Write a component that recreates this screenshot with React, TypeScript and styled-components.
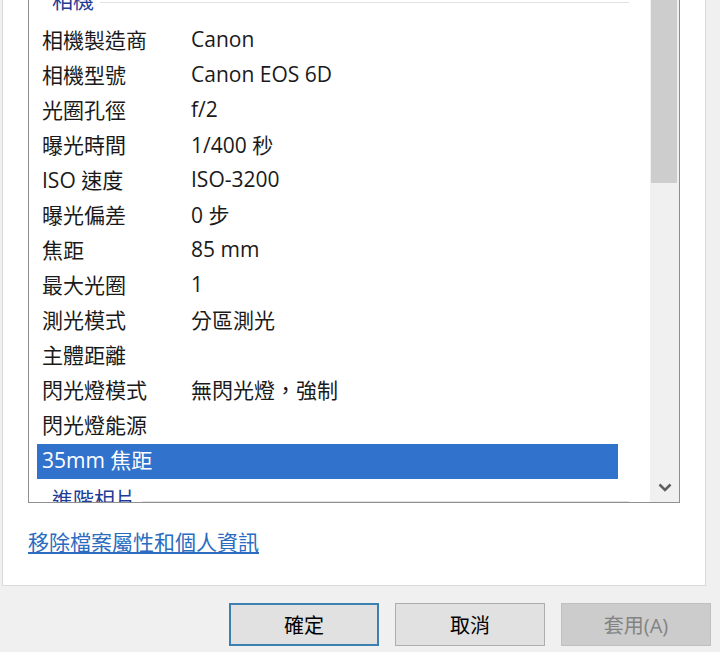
import React from "react";
import styled, { createGlobalStyle } from "styled-components";

const GlobalStyle = createGlobalStyle`
  html, body {
    margin: 0;
    padding: 0;
    background: #f0f0f0;
    overflow: hidden;
  }
  body {
    font-family: "Segoe UI", "Open Sans", "Noto Sans CJK TC", sans-serif;
  }
`;

const Dialog = styled.div`
  width: 720px;
  height: 652px;
  display: flex;
  flex-direction: column;
  background: #f0f0f0;
`;

const TabPanel = styled.div`
  margin-left: 2px;
  width: 704px;
  height: 586px;
  box-sizing: border-box;
  background: #ffffff;
  border: 1px solid #d9d9d9;
  border-top: none;
  padding-left: 25px;
  overflow: hidden;
  display: flex;
  flex-direction: column;
`;

const ListBox = styled.div`
  margin-top: -21px;
  width: 652px;
  height: 524px;
  box-sizing: border-box;
  border: 1px solid #8f8f8f;
  display: flex;
  overflow: hidden;
`;

const ListContent = styled.div`
  flex: 1;
  display: flex;
  flex-direction: column;
  overflow: hidden;
`;

const GroupHeader = styled.div`
  flex: 0 0 44px;
  display: flex;
  align-items: center;
  padding: 0 21px 6px 23px;
  box-sizing: border-box;
  font-size: 21px;
  color: #1e3c96;
`;

const GroupLine = styled.div`
  flex: 1;
  height: 1px;
  margin: 6px 0 0 6px;
  background: #e2e2e2;
`;

const Row = styled.div<{ $selected?: boolean }>`
  flex: 0 0 35px;
  box-sizing: border-box;
  display: grid;
  grid-template-columns: 149px 1fr;
  align-items: center;
  margin: 0 32px 0 8px;
  padding: 0 0 5px 5px;
  font-size: 21px;
  color: ${(p) => (p.$selected ? "#ffffff" : "#1a1a1a")};
  background: ${(p) => (p.$selected ? "#3173cc" : "transparent")};
  white-space: nowrap;
`;

const ScrollBar = styled.div`
  flex: 0 0 29px;
  display: flex;
  flex-direction: column;
  background: #f0f0f0;
`;

const Thumb = styled.div`
  height: 203px;
  margin: 0 2px 0 1px;
  background: #cdcdcd;
`;

const Track = styled.div`
  flex: 1;
`;

const ArrowButton = styled.div`
  flex: 0 0 30px;
  display: flex;
  align-items: center;
  justify-content: center;
  color: #606060;
`;

const Link = styled.a`
  margin-top: 24px;
  align-self: flex-start;
  font-size: 21px;
  line-height: 30px;
  color: #2b6cc0;
  text-decoration: underline;
  cursor: pointer;
`;

const ButtonRow = styled.div`
  display: flex;
  justify-content: flex-end;
  gap: 16px;
  margin-top: 17px;
  padding-right: 9px;
`;

const Button = styled.button<{ $default?: boolean }>`
  width: 150px;
  height: 43px;
  box-sizing: border-box;
  font-family: inherit;
  font-size: 20px;
  background: ${(p) => (p.disabled ? "#cccccc" : "#e1e1e1")};
  color: ${(p) => (p.disabled ? "#838383" : "#000000")};
  border: ${(p) =>
    p.$default ? "2px solid #3c7fb1" : p.disabled ? "1px solid #bfbfbf" : "1px solid #adadad"};
  padding: 0;
`;

const details: [string, string][] = [
  ["相機製造商", "Canon"],
  ["相機型號", "Canon EOS 6D"],
  ["光圈孔徑", "f/2"],
  ["曝光時間", "1/400 秒"],
  ["ISO 速度", "ISO-3200"],
  ["曝光偏差", "0 步"],
  ["焦距", "85 mm"],
  ["最大光圈", "1"],
  ["測光模式", "分區測光"],
  ["主體距離", ""],
  ["閃光燈模式", "無閃光燈，強制"],
  ["閃光燈能源", ""],
  ["35mm 焦距", ""],
];

export default function App() {
  return (
    <Dialog>
      <GlobalStyle />
      <TabPanel>
        <ListBox>
          <ListContent>
            <GroupHeader>
              相機
              <GroupLine />
            </GroupHeader>
            {details.map(([name, value]) => (
              <Row key={name} $selected={name === "35mm 焦距"}>
                <span>{name}</span>
                <span>{value}</span>
              </Row>
            ))}
            <GroupHeader>
              進階相片
              <GroupLine />
            </GroupHeader>
          </ListContent>
          <ScrollBar>
            <Thumb />
            <Track />
            <ArrowButton>
              <svg width="14" height="9" viewBox="0 0 14 9">
                <path d="M1.5 1.5 L7 7 L12.5 1.5" fill="none" stroke="currentColor" strokeWidth="2.6" />
              </svg>
            </ArrowButton>
          </ScrollBar>
        </ListBox>
        <Link>移除檔案屬性和個人資訊</Link>
      </TabPanel>
      <ButtonRow>
        <Button $default>確定</Button>
        <Button>取消</Button>
        <Button disabled>套用(A)</Button>
      </ButtonRow>
    </Dialog>
  );
}
